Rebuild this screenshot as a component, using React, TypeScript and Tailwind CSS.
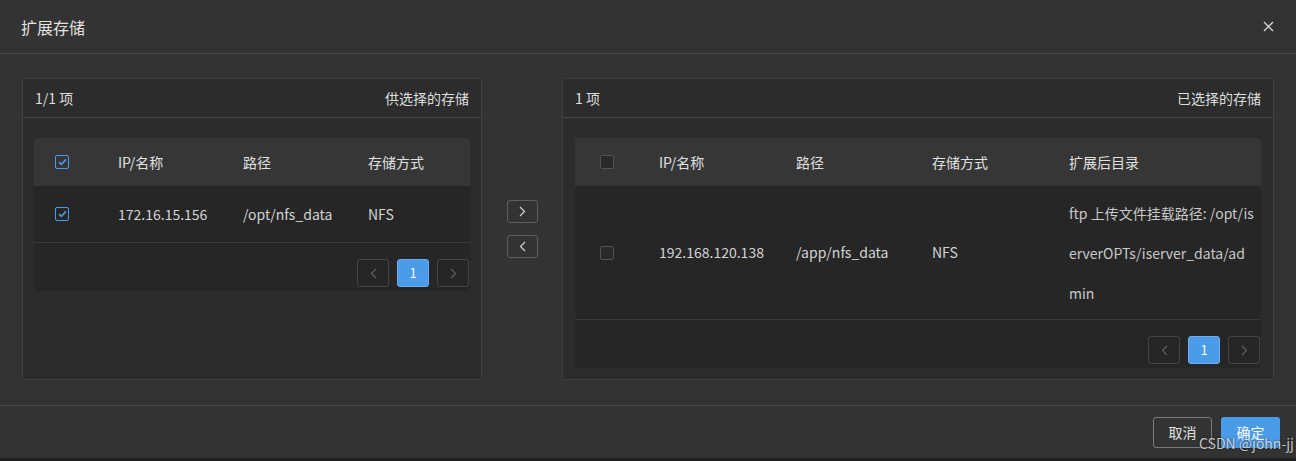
import React from 'react';

const font = { fontFamily: '"Noto Sans CJK SC", "Noto Sans", sans-serif' };

const Check: React.FC<{ checked?: boolean }> = ({ checked }) =>
  checked ? (
    <span className="flex h-[14px] w-[14px] items-center justify-center rounded-[2px] border border-[#4a9be8]">
      <svg width="9" height="8" viewBox="0 0 9 8" fill="none">
        <path d="M1 4.2 L3.4 6.4 L8 1.4" stroke="#4a9be8" strokeWidth="1.6" />
      </svg>
    </span>
  ) : (
    <span className="block h-[14px] w-[14px] rounded-[2px] border border-[#525252] bg-[#2a2a2a]" />
  );

const Chevron: React.FC<{ dir: 'left' | 'right'; color?: string }> = ({ dir, color = '#cfcfcf' }) => (
  <svg width="7" height="11" viewBox="0 0 7 11" fill="none">
    <path
      d={dir === 'right' ? 'M1 1 L5.5 5.5 L1 10' : 'M6 1 L1.5 5.5 L6 10'}
      stroke={color}
      strokeWidth="1.2"
    />
  </svg>
);

const Pager: React.FC = () => (
  <div className="flex items-start justify-end gap-2 h-[48px] pt-[16px]">
    <span className="flex h-[28px] w-[32px] items-center justify-center rounded-[3px] border border-[#444]">
      <Chevron dir="left" color="#5e5e5e" />
    </span>
    <span className="flex h-[28px] w-[32px] items-center justify-center rounded-[3px] border border-[#6aaef0] bg-[#4a9be8] text-[13px] text-white">
      1
    </span>
    <span className="flex h-[28px] w-[32px] items-center justify-center rounded-[3px] border border-[#444]">
      <Chevron dir="right" color="#5e5e5e" />
    </span>
  </div>
);

const PanelHeader: React.FC<{ left: string; right: string }> = ({ left, right }) => (
  <div className="flex h-[39px] items-center justify-between border-b border-[#454545] px-[12px] text-[14px] text-[#dedede]">
    <span>{left}</span>
    <span>{right}</span>
  </div>
);

export default function App() {
  return (
    <div className="relative h-[461px] w-[1296px] overflow-hidden bg-[#1e1e1e]" style={font}>
      <div className="flex h-[458px] flex-col bg-[#333333]">
        {/* header */}
        <div className="flex h-[54px] shrink-0 items-center justify-between border-b border-[#4a4a4a] pl-[21px] pr-[22px]">
          <span className="text-[16px] text-[#e2e2e2]">扩展存储</span>
          <svg width="11" height="11" viewBox="0 0 11 11" fill="none">
            <path d="M1 1 L10 10 M10 1 L1 10" stroke="#d6d6d6" strokeWidth="1.3" />
          </svg>
        </div>

        {/* body */}
        <div className="flex h-[352px] shrink-0 items-stretch border-b border-[#4a4a4a] px-[22px] pt-[24px] pb-[25px]">
          {/* left panel */}
          <div className="flex w-[460px] flex-col rounded-[3px] border border-[#404040] bg-[#2c2c2c]">
            <PanelHeader left="1/1 项" right="供选择的存储" />
            <div className="px-[11px] pt-[20px]">
              <div className="overflow-hidden rounded-t-[4px] text-[14px] text-[#d4d4d4]">
                <div className="flex h-[48px] items-center bg-[#363636] text-[#e0e0e0]">
                  <div className="w-[84px] pl-[21px]">
                    <Check checked />
                  </div>
                  <div className="w-[125px]">IP/名称</div>
                  <div className="w-[125px]">路径</div>
                  <div>存储方式</div>
                </div>
                <div className="flex h-[57px] items-center border-b border-[#3a3a3a] bg-[#262626]">
                  <div className="w-[84px] pl-[21px]">
                    <Check checked />
                  </div>
                  <div className="w-[125px]">172.16.15.156</div>
                  <div className="w-[125px]">/opt/nfs_data</div>
                  <div>NFS</div>
                </div>
                <div className="bg-[#262626] pr-[1px]">
                  <Pager />
                </div>
              </div>
            </div>
          </div>

          {/* transfer buttons */}
          <div className="flex w-[80px] flex-col items-center justify-center gap-[12px] pl-[1px]">
            <span className="flex h-[23px] w-[31px] items-center justify-center rounded-[3px] border border-[#5e5e5e]">
              <Chevron dir="right" />
            </span>
            <span className="flex h-[23px] w-[31px] items-center justify-center rounded-[3px] border border-[#5e5e5e]">
              <Chevron dir="left" />
            </span>
          </div>

          {/* right panel */}
          <div className="flex w-[712px] flex-col rounded-[3px] border border-[#404040] bg-[#2c2c2c]">
            <PanelHeader left="1 项" right="已选择的存储" />
            <div className="px-[12px] pt-[20px]">
              <div className="overflow-hidden rounded-t-[4px] text-[14px] text-[#d4d4d4]">
                <div className="flex h-[48px] items-center bg-[#363636] text-[#e0e0e0]">
                  <div className="w-[84px] pl-[25px]">
                    <Check />
                  </div>
                  <div className="w-[137px]">IP/名称</div>
                  <div className="w-[136px]">路径</div>
                  <div className="w-[137px]">存储方式</div>
                  <div>扩展后目录</div>
                </div>
                <div className="flex h-[134px] items-center border-b border-[#3a3a3a] bg-[#262626]">
                  <div className="w-[84px] pl-[25px]">
                    <Check />
                  </div>
                  <div className="w-[137px]">192.168.120.138</div>
                  <div className="w-[136px]">/app/nfs_data</div>
                  <div className="w-[137px]">NFS</div>
                  <div className="leading-[40px] whitespace-nowrap text-[#c9c9c9]">
                    <span className="block">ftp 上传文件挂载路径: /opt/is</span>
                    <span className="block">erverOPTs/iserver_data/ad</span>
                    <span className="block">min</span>
                  </div>
                </div>
                <div className="bg-[#262626] pr-[1px]">
                  <Pager />
                </div>
              </div>
            </div>
          </div>
        </div>

        {/* footer */}
        <div className="flex flex-1 items-center justify-end gap-[9px] pr-[16px]">
          <span className="flex h-[31px] w-[59px] items-center justify-center rounded-[3px] border border-[#7a7a7a] text-[14px] text-[#e0e0e0]">
            取消
          </span>
          <span className="flex h-[31px] w-[59px] items-center justify-center rounded-[3px] bg-[#4a9be8] text-[14px] text-white">
            确定
          </span>
        </div>
      </div>

      <span className="absolute left-[1199px] top-[433px] text-[14px] text-[#e8e8e8] opacity-80 [text-shadow:0_0_2px_#000]">
        CSDN @john-jj
      </span>
    </div>
  );
}
